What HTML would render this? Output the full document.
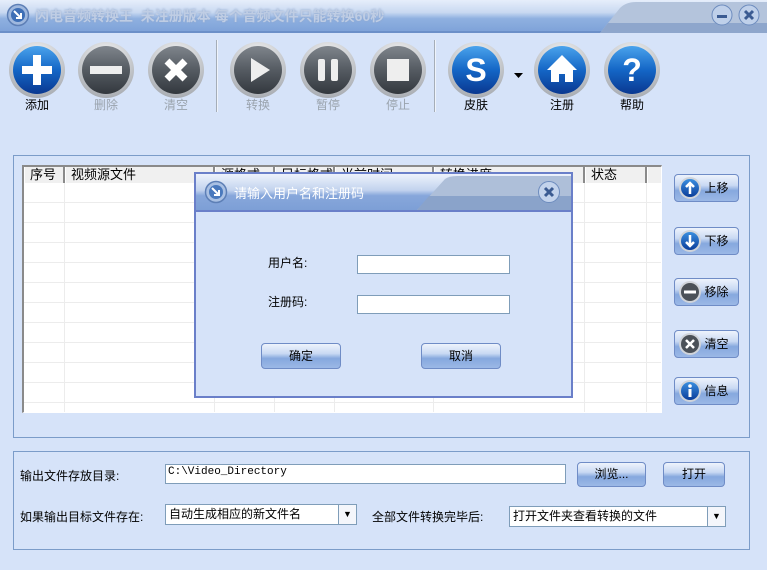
<!DOCTYPE html>
<html><head><meta charset="utf-8"><style>
*{margin:0;padding:0;box-sizing:border-box}
body{width:767px;height:570px;overflow:hidden;background:#d6e3f9;font-family:"Liberation Sans","Noto Sans CJK SC",sans-serif;font-size:12px;color:#000;position:relative}
.a{position:absolute}
.lbl{position:absolute;font-size:12px;width:60px;text-align:center;top:96px}
.dis{color:#9aa3ad}
.sep{position:absolute;top:40px;width:2px;height:72px;background:#a5adb8;border-right:1px solid #eef3fb}
.btn{position:absolute;border:1px solid #6f8cc6;border-radius:4px;background:linear-gradient(#eef3fc 0%,#c9d9f3 40%,#86a8de 60%,#9bb8e6 100%);text-align:center;font-size:12px}
.th{position:absolute;top:0;height:16px;border-right:2px solid #8a8a8a;border-left:1px solid #fff;background:#f0f0f0;padding-left:5px;line-height:15px;font-size:13px;white-space:nowrap;overflow:hidden}
.inp{position:absolute;background:#fff;border:1px solid #7f9db9}
</style></head><body>
<!-- title bar -->
<div class="a" style="left:0;top:0;width:767px;height:33px;background:linear-gradient(#e6eefb 0%,#c9d9f1 40%,#8fb0e0 60%,#7fa3d9 100%);border-bottom:2px solid #6b8fc8"></div>
<svg class="a" style="left:600px;top:0" width="167" height="33"><path d="M0 33 L20 8 Q26 2 36 2 L167 2 L167 33Z" fill="#b4c4dc"/><path d="M8 23 L167 23 L167 33 L0 33Z" fill="#8ea6cc"/></svg>
<svg class="a" style="left:6px;top:3px" width="24" height="24"><circle cx="12" cy="12" r="10.5" fill="#9fb8de" stroke="#5d7fb6" stroke-width="1.5"/><circle cx="12" cy="12" r="7" fill="#3e6fb6"/><path d="M8 8 L15 15 M15 10 L15 15 L10 15" stroke="#fff" stroke-width="2" fill="none"/></svg>
<div class="a" style="left:35px;top:6px;font-size:14px;font-weight:bold;color:#bfcde4;text-shadow:0 0 2px #8ea6cc">闪电音频转换王&nbsp;&nbsp;未注册版本 每个音频文件只能转换60秒</div>
<svg class="a" style="left:711px;top:3px" width="52" height="24"><circle cx="11" cy="12" r="10" fill="#bfd0ea" stroke="#6d8cbe"/><rect x="6" y="12" width="10" height="3" fill="#3b5b92"/><circle cx="38" cy="12" r="10" fill="#bfd0ea" stroke="#6d8cbe"/><path d="M34 8 L42 16 M42 8 L34 16" stroke="#3b5b92" stroke-width="3"/></svg>

<!-- toolbar icons -->
<svg class="a" style="left:0;top:36px" width="680" height="62">
<defs>
<radialGradient id="ring" cx="50%" cy="30%" r="70%"><stop offset="0" stop-color="#ffffff"/><stop offset="1" stop-color="#a8acb2"/></radialGradient>
<linearGradient id="bl" x1="0" y1="0" x2="0" y2="1"><stop offset="0" stop-color="#4aa3ec"/><stop offset="0.5" stop-color="#1466c6"/><stop offset="1" stop-color="#0a3890"/></linearGradient>
<linearGradient id="gr" x1="0" y1="0" x2="0" y2="1"><stop offset="0" stop-color="#7f858c"/><stop offset="0.5" stop-color="#555b62"/><stop offset="1" stop-color="#33383e"/></linearGradient>
</defs>
<g transform="translate(37,34)"><circle r="28" fill="url(#ring)"/><circle r="24" fill="url(#bl)"/><path d="M-4 -15h8v11h11v8h-11v11h-8v-11h-11v-8h11z" fill="#fff"/></g>
<g transform="translate(106,34)"><circle r="28" fill="url(#ring)"/><circle r="24" fill="url(#gr)"/><rect x="-16" y="-4" width="32" height="8" fill="#eee"/></g>
<g transform="translate(176,34)"><circle r="28" fill="url(#ring)"/><circle r="24" fill="url(#gr)"/><path d="M-9 -9L9 9M9 -9L-9 9" stroke="#fff" stroke-width="7"/></g>
<g transform="translate(258,34)"><circle r="28" fill="url(#ring)"/><circle r="24" fill="url(#gr)"/><path d="M-7 -12L12 0L-7 12Z" fill="#eee"/></g>
<g transform="translate(328,34)"><circle r="28" fill="url(#ring)"/><circle r="24" fill="url(#gr)"/><rect x="-10" y="-11" width="7" height="22" rx="2" fill="#eee"/><rect x="3" y="-11" width="7" height="22" rx="2" fill="#eee"/></g>
<g transform="translate(398,34)"><circle r="28" fill="url(#ring)"/><circle r="24" fill="url(#gr)"/><rect x="-11" y="-11" width="22" height="22" fill="#eee"/></g>
<g transform="translate(476,34)"><circle r="28" fill="url(#ring)"/><circle r="24" fill="url(#bl)"/><text x="0" y="11" text-anchor="middle" font-family="Liberation Sans" font-weight="bold" font-size="32" fill="#fff">S</text></g>
<path d="M514 37h9l-4.5 5z" fill="#000"/>
<g transform="translate(562,34)"><circle r="28" fill="url(#ring)"/><circle r="24" fill="url(#bl)"/><path d="M0 -15L15 0H11V12H3V4H-3V12H-11V0H-15Z" fill="#fff"/></g>
<g transform="translate(632,34)"><circle r="28" fill="url(#ring)"/><circle r="24" fill="url(#bl)"/><text x="0" y="11" text-anchor="middle" font-family="Liberation Sans" font-weight="bold" font-size="32" fill="#fff">?</text></g>
</svg>
<div class="lbl" style="left:7px">添加</div>
<div class="lbl dis" style="left:76px">删除</div>
<div class="lbl dis" style="left:146px">清空</div>
<div class="sep" style="left:216px"></div>
<div class="lbl dis" style="left:228px">转换</div>
<div class="lbl dis" style="left:298px">暂停</div>
<div class="lbl dis" style="left:368px">停止</div>
<div class="sep" style="left:434px"></div>
<div class="lbl" style="left:446px">皮肤</div>
<div class="lbl" style="left:532px">注册</div>
<div class="lbl" style="left:602px">帮助</div>

<!-- list group -->
<div class="a" style="left:13px;top:155px;width:737px;height:283px;border:1px solid #7b9cc9"></div>
<div class="a" style="left:22px;top:165px;width:640px;height:248px;background:#fff;border-top:2px solid #8a8a8a;border-left:2px solid #8a8a8a;border-right:1px solid #fff;border-bottom:1px solid #fff;overflow:hidden;
background-image:linear-gradient(#ececec 1px,transparent 1px);background-size:100% 20px;background-position:0 15px">
<div class="th" style="left:0;width:41px">序号</div>
<div class="th" style="left:41px;width:150px">视频源文件</div>
<div class="th" style="left:191px;width:60px">源格式</div>
<div class="th" style="left:251px;width:60px">目标格式</div>
<div class="th" style="left:311px;width:99px">当前时间</div>
<div class="th" style="left:410px;width:151px">转换进度</div>
<div class="th" style="left:561px;width:62px">状态</div>
<div class="th" style="left:623px;width:20px"></div>
<div class="a" style="left:40px;top:16px;width:1px;height:240px;background:#ececec"></div>
<div class="a" style="left:190px;top:16px;width:1px;height:240px;background:#ececec"></div>
<div class="a" style="left:250px;top:16px;width:1px;height:240px;background:#ececec"></div>
<div class="a" style="left:310px;top:16px;width:1px;height:240px;background:#ececec"></div>
<div class="a" style="left:409px;top:16px;width:1px;height:240px;background:#ececec"></div>
<div class="a" style="left:560px;top:16px;width:1px;height:240px;background:#ececec"></div>
<div class="a" style="left:622px;top:16px;width:1px;height:240px;background:#ececec"></div>
</div>

<!-- right buttons -->
<svg width="0" height="0" style="position:absolute"><defs><linearGradient id="sb" x1="0" y1="0" x2="0" y2="1"><stop offset="0" stop-color="#3b8fe0"/><stop offset="1" stop-color="#0a3d9a"/></linearGradient></defs></svg>
<div class="btn" style="left:674px;top:174px;width:65px;height:28px;line-height:26px;padding-left:20px">上移</div>
<div class="btn" style="left:674px;top:227px;width:65px;height:28px;line-height:26px;padding-left:20px">下移</div>
<div class="btn" style="left:674px;top:278px;width:65px;height:28px;line-height:26px;padding-left:20px">移除</div>
<div class="btn" style="left:674px;top:330px;width:65px;height:28px;line-height:26px;padding-left:20px">清空</div>
<div class="btn" style="left:674px;top:377px;width:65px;height:28px;line-height:26px;padding-left:20px">信息</div>
<svg class="a" style="left:679px;top:177px" width="24" height="230">
<g transform="translate(11,11)"><circle r="11" fill="#d0d4da"/><circle r="9" fill="url(#sb)"/><path d="M0 6V-5M-4 -1L0 -5L4 -1" stroke="#fff" stroke-width="2.5" fill="none"/></g>
<g transform="translate(11,64)"><circle r="11" fill="#d0d4da"/><circle r="9" fill="url(#sb)"/><path d="M0 -6V5M-4 1L0 5L4 1" stroke="#fff" stroke-width="2.5" fill="none"/></g>
<g transform="translate(11,115)"><circle r="11" fill="#d0d4da"/><circle r="9" fill="#4b5158"/><rect x="-6" y="-1.5" width="12" height="3" fill="#fff"/></g>
<g transform="translate(11,167)"><circle r="11" fill="#d0d4da"/><circle r="9" fill="#4b5158"/><path d="M-4 -4L4 4M4 -4L-4 4" stroke="#fff" stroke-width="2.5"/></g>
<g transform="translate(11,214)"><circle r="11" fill="#d0d4da"/><circle r="9" fill="url(#sb)"/><circle cy="-5" r="1.8" fill="#fff"/><rect x="-1.5" y="-2" width="3" height="8" fill="#fff"/></g>
</svg>

<!-- dialog -->
<div class="a" style="left:194px;top:172px;width:379px;height:226px;background:#d6e3f9;border:2px solid #6a7fc9"></div>
<div class="a" style="left:196px;top:174px;width:375px;height:38px;background:linear-gradient(#edf2fc 0%,#c2d3ee 45%,#87a7db 60%,#7d9fd6 100%);border-bottom:2px solid #6a7fc9"></div>
<svg class="a" style="left:417px;top:174px" width="154" height="36"><path d="M0 36 L28 5 Q32 2 40 2 L154 2 L154 36Z" fill="#aebfd9"/><path d="M12 22 L154 22 L154 36 L0 36Z" fill="#8aa3ca"/></svg>
<svg class="a" style="left:204px;top:180px" width="24" height="24"><circle cx="12" cy="12" r="10.5" fill="#a9c0e3" stroke="#5d7fb6" stroke-width="1.5"/><circle cx="12" cy="12" r="7" fill="#4a79bd"/><path d="M8 8 L15 15 M15 10 L15 15 L10 15" stroke="#fff" stroke-width="2" fill="none"/></svg>
<div class="a" style="left:234px;top:183px;color:#fff;font-size:13px">请输入用户名和注册码</div>
<svg class="a" style="left:537px;top:180px" width="24" height="24"><circle cx="12" cy="12" r="10.5" fill="#c3d3ec" stroke="#6d8cbe"/><path d="M8 8L16 16M16 8L8 16" stroke="#3b5b92" stroke-width="3"/></svg>
<div class="a" style="left:268px;top:254px">用户名:</div>
<div class="inp" style="left:357px;top:255px;width:153px;height:19px"></div>
<div class="a" style="left:268px;top:293px">注册码:</div>
<div class="inp" style="left:357px;top:295px;width:153px;height:19px"></div>
<div class="btn" style="left:261px;top:343px;width:80px;height:26px;line-height:24px">确定</div>
<div class="btn" style="left:421px;top:343px;width:80px;height:26px;line-height:24px">取消</div>

<!-- bottom group -->
<div class="a" style="left:13px;top:451px;width:737px;height:99px;border:1px solid #7b9cc9"></div>
<div class="a" style="left:20px;top:467px">输出文件存放目录:</div>
<div class="inp" style="left:165px;top:464px;width:401px;height:20px;font-family:'Liberation Mono',monospace;font-size:11px;padding:1px 0 0 2px">C:\Video_Directory</div>
<div class="btn" style="left:577px;top:462px;width:69px;height:25px;line-height:23px">浏览...</div>
<div class="btn" style="left:663px;top:462px;width:62px;height:25px;line-height:23px">打开</div>
<div class="a" style="left:20px;top:508px">如果输出目标文件存在:</div>
<div class="inp" style="left:165px;top:504px;width:192px;height:21px;line-height:19px;padding-left:3px">自动生成相应的新文件名</div>
<div class="a" style="left:338px;top:505px;width:18px;height:19px;border-left:1px solid #7f9db9;background:#f4f6fb;font-size:9px;text-align:center;line-height:18px">▼</div>
<div class="a" style="left:372px;top:508px">全部文件转换完毕后:</div>
<div class="inp" style="left:509px;top:506px;width:217px;height:21px;line-height:19px;padding-left:3px">打开文件夹查看转换的文件</div>
<div class="a" style="left:707px;top:507px;width:18px;height:19px;border-left:1px solid #7f9db9;background:#f4f6fb;font-size:9px;text-align:center;line-height:18px">▼</div>
</body></html>
